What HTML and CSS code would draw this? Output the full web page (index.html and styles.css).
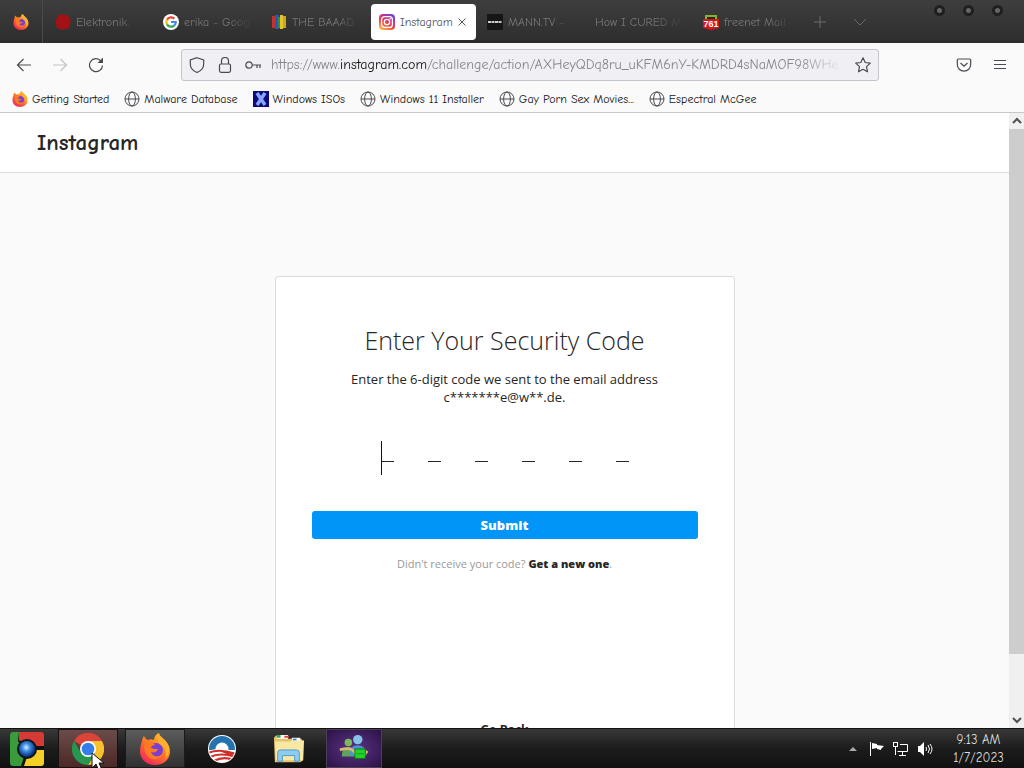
FILE: index.html
```html
<!DOCTYPE html>
<html lang="en">
<head>
    <meta charset="UTF-8">
    <meta name="viewport" content="width=device-width, initial-scale=1.0">
    <title>Instagram</title>
    <link rel="stylesheet" href="styles.css">
</head>
<body>
    <!-- Shared icons -->
    <svg class="sprite" aria-hidden="true">
        <defs>
            <linearGradient id="fire" x1="1" y1="0" x2="0.3" y2="1">
                <stop offset="0" stop-color="#ffe03a"/>
                <stop offset="0.45" stop-color="#ff8a1e"/>
                <stop offset="1" stop-color="#f5285a"/>
            </linearGradient>
            <linearGradient id="insta" x1="0.2" y1="1" x2="0.8" y2="0">
                <stop offset="0" stop-color="#fdb94b"/>
                <stop offset="0.4" stop-color="#f0413f"/>
                <stop offset="0.7" stop-color="#c3309a"/>
                <stop offset="1" stop-color="#5b4fd6"/>
            </linearGradient>
            <radialGradient id="orb" cx="0.45" cy="0.4" r="0.6">
                <stop offset="0" stop-color="#d8f0ff"/>
                <stop offset="0.4" stop-color="#3d8fe6"/>
                <stop offset="1" stop-color="#05286e"/>
            </radialGradient>
        </defs>
        <symbol id="firefox" viewBox="0 0 32 32">
            <path fill="url(#fire)" d="M3 8c0-2 1-4 2-5 1 2 2 3 4 4 2-1 4-1 6 0 0-3 2-6 5-7 0 3 2 4 5 7 4 3 6 7 6 12 0 7-6 13-15 13S1 26 1 18c0-4 1-7 2-10z"/>
            <circle cx="17" cy="17" r="7" fill="#7a3fd0"/>
            <path fill="#ffb02e" d="M20 0c0 4 8 6 10 14 1 5-1 9-4 12 2-6 1-11-4-14-3-2-4-7-2-12z"/>
            <path fill="#ff7a22" d="M6 10c4-2 8-1 10 2-3 0-4 2-4 3 2 1 4 1 7 1-1 3-4 4-7 3 1 4 6 6 11 3-3 6-13 6-16-1-2-4-2-8-1-11z"/>
        </symbol>
        <symbol id="globe" viewBox="0 0 16 16">
            <g fill="none" stroke="#4a4a50">
                <circle cx="8" cy="8" r="7"/>
                <ellipse cx="8" cy="8" rx="3.4" ry="7"/>
                <path d="M1 8h14"/>
            </g>
        </symbol>
    </svg>

    <header class="tab-bar">
        <div class="pinned-tab"><svg class="icon16"><use href="#firefox"/></svg></div>
        <nav class="tabs">
            <a class="tab" href="#">
                <svg class="icon16" viewBox="0 0 16 16"><path fill="#a01216" d="M8 0l2 1 3 0 1 3 2 3-1 3-1 4-3 1-3 1-3-1-3-1-1-4-1-3 2-3 1-3 3 0z"/></svg>
                <span>Elektronik.</span>
            </a>
            <a class="tab" href="#">
                <svg class="icon16" viewBox="0 0 16 16">
                    <circle cx="8" cy="8" r="8" fill="#fff"/>
                    <g fill="none" stroke-width="2.2">
                        <path stroke="#ea4335" d="M4 5.6A4.8 4.8 0 0 1 11.4 4.6"/>
                        <path stroke="#fbbc05" d="M4 5.6a4.8 4.8 0 0 0 0 4.8"/>
                        <path stroke="#34a853" d="M4 10.4a4.8 4.8 0 0 0 7.4 1"/>
                        <path stroke="#4285f4" d="M11.4 11.4A4.8 4.8 0 0 0 12.8 8H8"/>
                    </g>
                </svg>
                <span>erika - Goog</span>
            </a>
            <a class="tab" href="#">
                <svg class="icon16" viewBox="0 0 16 16">
                    <path fill="#c0332e" d="M1 2h4v12H1z"/><path fill="#2c56b8" d="M4 1h4v14H4z"/>
                    <path fill="#2f8b50" d="M7 3h2v11H7z"/><path fill="#e3c429" d="M9 1h3v14H9z"/><path fill="#d2a51c" d="M12 2h3v12h-3z"/>
                </svg>
                <span>THE BAAAD</span>
            </a>
            <a class="tab active" href="#">
                <svg class="icon16" viewBox="0 0 16 16">
                    <rect width="16" height="16" rx="4" fill="url(#insta)"/>
                    <g fill="none" stroke="#fff" stroke-width="1.3">
                        <rect x="2.6" y="2.6" width="10.8" height="10.8" rx="3"/><circle cx="8" cy="8" r="2.7"/>
                    </g>
                    <circle cx="11.2" cy="4.8" r="0.8" fill="#fff"/>
                </svg>
                <span>Instagram</span>
                <svg class="close" viewBox="0 0 8 8"><path d="M0.5 0.5l7 7M7.5 0.5l-7 7" stroke="#555"/></svg>
            </a>
            <a class="tab" href="#">
                <svg class="icon16" viewBox="0 0 16 16"><path fill="#161616" d="M0 0h16v16H0z"/><path stroke="#ccc" stroke-width="2" stroke-dasharray="3 0.5" d="M1 8h14"/></svg>
                <span>MANN.TV -</span>
            </a>
            <a class="tab" href="#"><span>How I CURED My</span></a>
            <a class="tab" href="#">
                <svg class="icon16" viewBox="0 0 16 16">
                    <path fill="#82b52b" d="M2 1h12v4H2z"/><path fill="#282828" d="M4 3h8v2H4z"/>
                    <path fill="#d8141c" d="M0 5h16v9l-8 2-8-2z"/>
                    <text x="8" y="13" class="mail-count">761</text>
                </svg>
                <span>freenet Mail</span>
            </a>
        </nav>
        <button class="tab-button" aria-label="New tab"><svg viewBox="0 0 14 14"><path d="M7 1v12M1 7h12"/></svg></button>
        <button class="tab-button" aria-label="List all tabs"><svg viewBox="0 0 14 14"><path d="M1 4l6 6 6-6"/></svg></button>
        <div class="window-buttons">
            <button aria-label="Minimize"></button>
            <button aria-label="Maximize"></button>
            <button aria-label="Close"></button>
        </div>
    </header>

    <div class="toolbar">
        <div class="nav-buttons">
            <button aria-label="Back"><svg class="icon16 line" viewBox="0 0 16 16"><path d="M15 8H1.5M7.5 2L1.5 8l6 6"/></svg></button>
            <button aria-label="Forward" disabled><svg class="icon16 line" viewBox="0 0 16 16"><path d="M1 8h13.500M8.500 2l6 6-6 6"/></svg></button>
            <button aria-label="Reload"><svg class="icon16 line" viewBox="0 0 16 16"><path d="M13 4A6.500 6.500 0 1 0 14.500 8.500"/><path fill="#4a4a50" stroke="none" d="M15 0.500v5.500H9.500z"/></svg></button>
        </div>
        <div class="url-bar">
            <svg class="icon16 line" viewBox="0 0 16 16"><path d="M8 0.700L14.700 3v4c0 4-3 7-6.700 8.500C4.300 14 1.300 11 1.300 7V3z"/></svg>
            <svg class="icon16 line" viewBox="0 0 16 16"><rect x="2.500" y="7" width="11" height="8.300" rx="1.500"/><path d="M4.500 7V4a3.500 3.500 0 0 1 7 0v3"/></svg>
            <svg class="icon16 line" viewBox="0 0 16 16"><circle cx="4" cy="8" r="3.200"/><path d="M7.200 8H16M12 8v3M15 8v3"/></svg>
            <a class="url" href="#">https://www.<b>instagram.com</b>/challenge/action/AXHeyQDq8ru_uKFM6nY-KMDRD4sNaMOF98WHe</a>
            <svg class="icon16 line" viewBox="0 0 16 16"><path stroke-linejoin="round" d="M8 0.800l2.200 4.700 5.100.6-3.800 3.500 1 5.200L8 12.300l-4.500 2.500 1-5.200L.7 6.100l5.100-.6z"/></svg>
        </div>
        <div class="menu-buttons">
            <button aria-label="Save to Pocket"><svg class="icon16 line" viewBox="0 0 16 16"><path d="M2.500 2h11a1.200 1.200 0 0 1 1.200 1.200V7.500a6.700 6.700 0 0 1-13.400 0V3.200A1.200 1.200 0 0 1 2.500 2zM4.500 6L8 9.300 11.500 6"/></svg></button>
            <button aria-label="Menu"><svg class="icon16 line" viewBox="0 0 16 16"><path d="M2 3.500h12M2 7.500h12M2 11.500h12"/></svg></button>
        </div>
    </div>

    <nav class="bookmarks">
        <a href="#"><svg class="icon16"><use href="#firefox"/></svg>Getting Started</a>
        <a href="#"><svg class="icon16"><use href="#globe"/></svg>Malware Database</a>
        <a href="#">
            <svg class="icon16" viewBox="0 0 16 16"><path fill="#0b0b78" d="M0 0h16v16H0z"/><path stroke="#86a6ff" stroke-width="3.500" d="M4 2l8 12M12 2L4 14"/></svg>
            Windows ISOs
        </a>
        <a href="#"><svg class="icon16"><use href="#globe"/></svg>Windows 11 Installer</a>
        <a href="#"><svg class="icon16"><use href="#globe"/></svg>Gay Porn Sex Movies...</a>
        <a href="#"><svg class="icon16"><use href="#globe"/></svg>Espectral McGee</a>
    </nav>

    <div class="viewport">
        <main class="page">
            <div class="site-header"><a class="logo" href="#">Instagram</a></div>
            <form class="card">
                <h1>Enter Your Security Code</h1>
                <label for="security-code">Enter the 6-digit code we sent to the email address c*******e@w**.de.</label>
                <div class="code-field">
                    <input id="security-code" type="text" maxlength="6" inputmode="numeric">
                    <span class="caret"></span>
                </div>
                <button class="submit" type="submit">Submit</button>
                <p class="resend">Didn't receive your code? <a href="#">Get a new one</a>.</p>
                <a class="go-back" href="#">Go Back</a>
            </form>
        </main>
        <div class="scrollbar">
            <svg viewBox="0 0 15 16"><path d="M4 10l4-4 4 4"/></svg>
            <div class="track"><div class="thumb"></div></div>
            <svg viewBox="0 0 15 16"><path d="M4 6l4 4 4-4"/></svg>
        </div>
    </div>

    <footer class="taskbar">
        <button class="start" aria-label="Start">
            <svg viewBox="0 0 34 34">
                <rect width="34" height="34" rx="3" fill="#111"/>
                <path fill="#d63a34" d="M9 0h22a3 3 0 0 1 3 3v11H18L9 8z"/>
                <path fill="#3a9b3c" d="M3 0h6l-1 9 7 13-4 12H3a3 3 0 0 1-3-3V3a3 3 0 0 1 3-3z"/>
                <path fill="#f6cf26" d="M34 18v13a3 3 0 0 1-3 3H14l4-12 8-4z"/>
                <circle cx="17" cy="17" r="10" fill="#0c1420"/>
                <circle cx="17" cy="17" r="8" fill="url(#orb)"/>
            </svg>
        </button>
        <div class="tasks">
            <button class="task chrome" aria-label="Chrome">
                <svg viewBox="0 0 32 32">
                    <path fill="#dc4437" d="M16 16L2.100 8a16 16 0 0 1 27.800 0z"/>
                    <path fill="#f8c22c" d="M16 16V8h13.900A16 16 0 0 1 16 32l7-12z"/>
                    <path fill="#27974f" d="M2.100 8l7 12 7 4-.1 8A16 16 0 0 1 2.100 8z"/>
                    <path fill="#27974f" d="M16 32l7-12-7 2-7-2z"/>
                    <circle cx="16" cy="16" r="8" fill="#fff"/><circle cx="16" cy="16" r="6.300" fill="#357de8"/>
                </svg>
                <svg class="cursor" viewBox="0 0 14 20"><path fill="#fff" stroke="#111" d="M1 1v15l4-4 3 7 3-1-3-7h5z"/></svg>
            </button>
            <button class="task firefox" aria-label="Firefox"><svg viewBox="0 0 32 32"><use href="#firefox"/></svg></button>
            <button class="task" aria-label="Obama">
                <svg class="small" viewBox="0 0 28 28">
                    <clipPath id="disc"><circle cx="14" cy="14" r="13"/></clipPath>
                    <circle cx="14" cy="14" r="14" fill="#fff"/>
                    <g clip-path="url(#disc)">
                        <path fill="#2473ae" d="M0 0h28v15H0z"/>
                        <circle cx="14" cy="14" r="6.500" fill="#fff"/>
                        <path fill="#fff" d="M0 16Q12 11 28 18v10H0z"/>
                        <g fill="none" stroke="#cf3029" stroke-width="2.200">
                            <path d="M0 18q11-5 28 1M2 22q10-5 26 0M6 26q9-5 20-1M14 16q8 3 14 6"/>
                        </g>
                    </g>
                </svg>
            </button>
            <button class="task" aria-label="Explorer">
                <svg viewBox="0 0 34 32">
                    <path fill="#e3c46d" d="M1 4l2-2h11l2 3h14l2 3v20l-3 2H2z"/>
                    <path fill="#fff" d="M4 1h12v4H4zM20 4h9v4h-9z"/>
                    <path fill="#31a844" d="M4 1h4v3H4z"/><path fill="#d6433a" d="M12 2h5v2h-5z"/><path fill="#3a7cc4" d="M21 5h4v2h-4z"/>
                    <path fill="#f9e8a4" d="M2 8h16l3-1h12l-1 21H3z"/>
                    <path fill="#8ccdf1" stroke="#4d98cc" d="M5 29V20q0-3 3-3h17q3 0 3 3v9h-5v-6H10v6z"/>
                </svg>
            </button>
            <button class="task messenger" aria-label="Messenger">
                <svg viewBox="0 0 34 32">
                    <circle cx="11" cy="9" r="4" fill="#7db95d"/><path fill="#5ca55a" d="M4 24q0-10 7-10t8 10z"/>
                    <circle cx="21" cy="6" r="5" fill="#86c2ea"/><path fill="#4f94d1" d="M12 23q0-11 9-11t9 11z"/>
                    <path fill="none" stroke="#d8b872" stroke-width="3" d="M2 17q12-4 17 4t12-3"/>
                    <rect x="18" y="16" width="11" height="10" fill="#21d528" stroke="#087a11"/>
                    <path stroke="#129a1c" d="M20 21h7"/>
                </svg>
            </button>
        </div>
        <div class="tray">
            <svg viewBox="0 0 16 16"><path fill="#aaa" d="M4 10l4-4 4 4z"/></svg>
            <svg viewBox="0 0 16 16"><path fill="#fff" d="M1 1h1v14H1zM3 2l5 1v1l7 1-3 3 0 1-4-1V7L3 8z"/></svg>
            <svg viewBox="0 0 16 16"><g fill="none" stroke="#fff"><path d="M7 3.500h7.500v7H4.500M9.500 11v3M6 14.500h7M2.500 6v8"/><rect x="0.500" y="1.500" width="4" height="4"/></g></svg>
            <svg viewBox="0 0 16 16"><path fill="#fff" d="M1 5h2l4-4v14l-4-4H1z"/><path fill="none" stroke="#fff" d="M9 6q1 2 0 4M11 4q3 4 0 8M13 3q4 5 0 10"/></svg>
        </div>
        <div class="clock"><span>9:13 AM</span><span>1/7/2023</span></div>
    </footer>
</body>
</html>
```
FILE: styles.css
```css
* {
    box-sizing: border-box;
}

body {
    margin: 0;
    height: 100vh;
    display: flex;
    flex-direction: column;
    overflow: hidden;
    background: #fafafa;
    color: #151515;
    font: 12px/16px "Comic Sans MS", "Comic Neue", "Open Sans", sans-serif;
}

button {
    padding: 0;
    border: 0;
    background: none;
    font: inherit;
    color: inherit;
}

a {
    color: inherit;
    text-decoration: none;
}

svg {
    display: block;
    flex: none;
}

.sprite {
    position: absolute;
    width: 0;
    height: 0;
}

.icon16 {
    width: 16px;
    height: 16px;
}

.line {
    fill: none;
    stroke: #4a4a50;
    stroke-width: 1.2;
}

/* Tab strip */
.tab-bar {
    flex: none;
    height: 43px;
    display: flex;
    background: linear-gradient(#3e3e3e, #2d2d2d);
    color: #777;
}

.pinned-tab {
    width: 43px;
    display: flex;
    align-items: center;
    justify-content: center;
    border-right: 1px solid #4a4a4a;
}

.tabs {
    display: flex;
    gap: 3px;
    padding: 4px 0 3px 4px;
}

.tab {
    width: 105px;
    display: flex;
    align-items: center;
    gap: 5px;
    padding: 0 8px;
    border-radius: 4px;
}

.tab span {
    flex: 1;
    overflow: hidden;
    white-space: nowrap;
    line-height: 20px;
    mask-image: linear-gradient(to right, #000 65%, transparent);
}

.tab.active {
    background: #fff;
    color: #555;
}

.tab.active span {
    overflow: visible;
    mask-image: none;
}

.close {
    width: 8px;
    height: 8px;
    margin-right: 3px;
}

.mail-count {
    font: bold 9px "Liberation Sans", sans-serif;
    fill: #fff;
    text-anchor: middle;
}

.tab-button {
    width: 40px;
    display: flex;
    align-items: center;
    justify-content: center;
}

.tab-button svg {
    width: 14px;
    height: 14px;
    fill: none;
    stroke: #6b6b6b;
}

.window-buttons {
    margin-left: auto;
    display: flex;
    gap: 18px;
    padding: 5px 21px 0 0;
}

.window-buttons button {
    width: 11px;
    height: 11px;
    border-radius: 50%;
    border: 3px solid #1f1f1f;
    background: #666;
}

/* Address bar */
.toolbar {
    flex: none;
    height: 43px;
    display: flex;
    align-items: center;
    padding: 0 16px;
}

.nav-buttons {
    display: flex;
    gap: 20px;
}

.nav-buttons button:disabled {
    opacity: 0.3;
}

.url-bar {
    flex: 1;
    min-width: 0;
    height: 32px;
    margin: 0 77px;
    padding: 0 7px;
    display: flex;
    align-items: center;
    gap: 12px;
    border: 1px solid #c4c4cc;
    border-radius: 3px;
    background: #f0f0f4;
}

.url {
    flex: 1;
    overflow: hidden;
    white-space: nowrap;
    color: #85858d;
    font-size: 14px;
    line-height: 20px;
    margin-left: -2px;
    mask-image: linear-gradient(to right, #000 92%, transparent);
}

.url b {
    font-weight: 400;
    color: #111;
}

.menu-buttons {
    display: flex;
    gap: 20px;
}

/* Bookmarks */
.bookmarks {
    flex: none;
    height: 27px;
    display: flex;
    align-items: center;
    gap: 15px;
    padding: 0 12px;
    border-bottom: 1px solid #c8c8c8;
    white-space: nowrap;
}

.bookmarks a {
    display: flex;
    align-items: center;
    gap: 4px;
}

/* Page */
.viewport {
    flex: 1;
    min-height: 0;
    display: flex;
}

.page {
    flex: 1;
    overflow: hidden;
    font-family: "Segoe UI", "Open Sans", sans-serif;
    color: #262626;
}

.site-header {
    height: 60px;
    display: flex;
    align-items: center;
    padding: 0 37px;
    background: #fff;
    border-bottom: 1px solid #dbdbdb;
}

.logo {
    font: bold 23px/32px "Comic Sans MS", "Comic Neue", cursive;
}

.card {
    width: 460px;
    max-width: 100%;
    margin: 103px auto 0;
    padding: 43px 36px 32px;
    display: flex;
    flex-direction: column;
    align-items: center;
    text-align: center;
    background: #fff;
    border: 1px solid #dbdbdb;
    border-radius: 3px;
}

.card h1 {
    margin: 0 0 10px;
    font-size: 25px;
    line-height: 40px;
    font-weight: 300;
}

.card label {
    width: 320px;
    font-size: 13px;
    line-height: 18px;
}

.code-field {
    position: relative;
    margin-top: 35px;
}

/* one dash for each digit */
.code-field input {
    display: block;
    width: 248px;
    height: 34px;
    padding: 0;
    border: 0;
    outline: 0;
    font: 300 24px/34px "Open Sans", sans-serif;
    background: repeating-linear-gradient(to right, #262626 0 13px, transparent 13px 47px) 0 20px / 100% 1px no-repeat;
}

.caret {
    position: absolute;
    left: 0;
    top: 0;
    width: 1px;
    height: 34px;
    background: #111;
}

.submit {
    width: 100%;
    height: 28px;
    margin-top: 36px;
    border-radius: 3px;
    background: #0095f6;
    color: #fff;
    font-size: 13px;
    line-height: 28px;
    font-weight: 800;
}

.resend {
    margin: 16px 0 0;
    font-size: 11px;
    line-height: 18px;
    color: #999;
}

.resend a {
    font-weight: 800;
    color: #262626;
}

.go-back {
    margin-top: 148px;
    font-size: 12px;
    line-height: 18px;
    font-weight: 700;
}

.scrollbar {
    width: 15px;
    display: flex;
    flex-direction: column;
    background: #f0f0f0;
}

.scrollbar svg {
    width: 15px;
    height: 16px;
    fill: none;
    stroke: #505050;
    stroke-width: 2;
}

.track {
    flex: 1;
}

.thumb {
    height: 90%;
    background: #cdcdcd;
}

/* Taskbar */
.taskbar {
    flex: none;
    height: 40px;
    display: flex;
    align-items: center;
    background: linear-gradient(#383838, #1c1c1c 50%, #111);
    border-top: 1px solid #111;
    color: #ddd;
}

.start {
    width: 58px;
    padding-left: 10px;
}

.start svg {
    width: 34px;
    height: 34px;
}

.tasks {
    display: flex;
    gap: 7px;
    height: 100%;
}

.task {
    position: relative;
    width: 60px;
    display: flex;
    align-items: center;
    justify-content: center;
}

.task svg {
    width: 32px;
    height: 32px;
}

.task .small {
    width: 28px;
    height: 28px;
}

.task.chrome {
    background: linear-gradient(#6b4c4a, #4c2826);
    border: 1px solid #1a1010;
}

.task.firefox {
    background: linear-gradient(#5c5c5c, #303030);
    border: 1px solid #1a1a1a;
}

.task.messenger {
    width: 56px;
    background: radial-gradient(#5a3585, #2c1146);
    border: 1px solid #4c4056;
}

.task .cursor {
    position: absolute;
    left: 32px;
    top: 22px;
    width: 14px;
    height: 20px;
}

.tray {
    margin-left: auto;
    display: flex;
    gap: 8px;
}

.tray svg {
    width: 16px;
    height: 16px;
}

.clock {
    width: 91px;
    display: flex;
    flex-direction: column;
    align-items: center;
    font-size: 13px;
    line-height: 18px;
}
```
